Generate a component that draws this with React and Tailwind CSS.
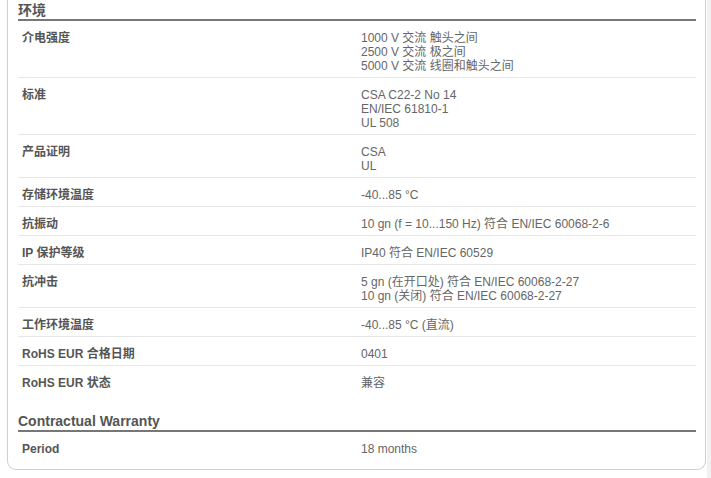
import React from "react";

const env = [
  ["介电强度", ["1000 V 交流 触头之间", "2500 V 交流 极之间", "5000 V 交流 线圈和触头之间"]],
  ["标准", ["CSA C22-2 No 14", "EN/IEC 61810-1", "UL 508"]],
  ["产品证明", ["CSA", "UL"]],
  ["存储环境温度", ["-40...85 °C"]],
  ["抗振动", ["10 gn (f = 10...150 Hz) 符合 EN/IEC 60068-2-6"]],
  ["IP 保护等级", ["IP40 符合 EN/IEC 60529"]],
  ["抗冲击", ["5 gn (在开口处) 符合 EN/IEC 60068-2-27", "10 gn (关闭) 符合 EN/IEC 60068-2-27"]],
  ["工作环境温度", ["-40...85 °C (直流)"]],
  ["RoHS EUR 合格日期", ["0401"]],
  ["RoHS EUR 状态", ["兼容"]],
];

function Row({ label, values, last }) {
  return (
    <div className={"flex pt-[10px] pb-[4px] text-[12px] leading-[14px] " + (last ? "" : "border-b border-[#e6e6e6]")}>
      <div className="w-[343px] shrink-0 pl-[4px] font-bold text-[#555555]">{label}</div>
      <div className="text-[#666666]">
        {values.map((v, i) => (
          <div key={i}>{v}</div>
        ))}
      </div>
    </div>
  );
}

function Heading({ children, className = "" }) {
  return (
    <div className={"pt-[2px] text-[14px] leading-[17px] font-bold text-[#555555] border-b-2 border-[#777777] " + className}>
      {children}
    </div>
  );
}

export default function App() {
  return (
    <div
      className="flex w-[711px] h-[478px] bg-white overflow-hidden"
      style={{ fontFamily: '"Liberation Sans", Arial, "Noto Sans CJK SC", sans-serif' }}
    >
      <div className="ml-[7px] w-[699px] h-[470px] border-l border-r border-b border-[#cfcfcf] rounded-b-[9px] pl-[10px] pr-[9px]">
        <Heading>环境</Heading>
        {env.map(([l, v], i) => (
          <Row key={i} label={l} values={v} last={i === env.length - 1} />
        ))}
        <Heading className="mt-[17px]">Contractual Warranty</Heading>
        <Row label="Period" values={["18 months"]} last />
      </div>
      <div className="flex-1 ml-[1px] bg-[#f1f1f1]" />
    </div>
  );
}
